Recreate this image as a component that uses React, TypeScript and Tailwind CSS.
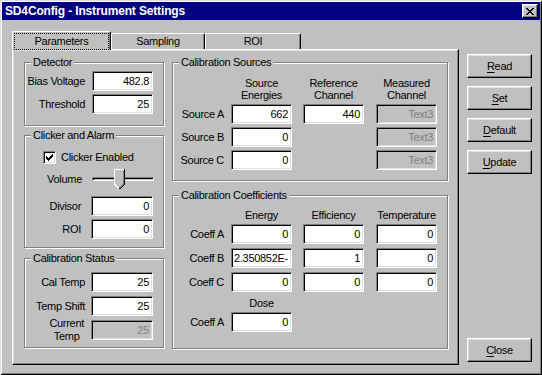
import React from "react";

const raised =
  "border border-t-white border-l-white border-r-black border-b-black shadow-[inset_-1px_-1px_0_#808080,inset_1px_1px_0_#dfdfdf]";
const sunken =
  "border border-t-[#808080] border-l-[#808080] border-r-white border-b-white shadow-[inset_1px_1px_0_#000,inset_-1px_-1px_0_#dfdfdf]";

const closeGlyph = [
  "XX....XX",
  ".XX..XX.",
  "..XXXX..",
  "...XX...",
  "..XXXX..",
  ".XX..XX.",
  "XX....XX",
];

const checkGlyph = [
  "......X",
  ".....XX",
  "X...XXX",
  "XX.XXX.",
  "XXXXX..",
  ".XXX...",
  "..X....",
];

function Pixels({ rows }: { rows: string[] }) {
  return (
    <svg width={rows[0].length} height={rows.length} shapeRendering="crispEdges">
      {rows.flatMap((r, y) =>
        [...r].map((c, x) =>
          c === "X" ? <rect key={`${x}-${y}`} x={x} y={y} width={1} height={1} fill="#000" /> : null
        )
      )}
    </svg>
  );
}

function Field({
  value,
  disabled,
  left,
  className = "",
}: {
  value: string;
  disabled?: boolean;
  left?: boolean;
  className?: string;
}) {
  return (
    <div
      className={`${sunken} h-[20px] w-[61px] shrink-0 flex items-center overflow-hidden whitespace-nowrap ${
        disabled ? "bg-[#c0c0c0] text-[#808080]" : "bg-white"
      } ${left ? "justify-start pl-[2px]" : "justify-end pr-[3px]"} ${className}`}
    >
      {value}
    </div>
  );
}

function Group({
  title,
  className,
  children,
}: {
  title: string;
  className: string;
  children: React.ReactNode;
}) {
  return (
    <fieldset
      className={`border border-[#808080] shadow-[1px_1px_0_#fff,inset_1px_1px_0_#fff] ${className}`}
    >
      <legend className="ml-[6px] px-[2px] leading-[13px] bg-[#c0c0c0]">{title}</legend>
      {children}
    </fieldset>
  );
}

function Button({ label, hot }: { label: string; hot: number }) {
  return (
    <div className={`${raised} h-[24px] w-[65px] flex items-center justify-center`}>
      {label.slice(0, hot)}
      <span className="underline underline-offset-2">{label[hot]}</span>
      {label.slice(hot + 1)}
    </div>
  );
}

function Slider() {
  return (
    <div className="relative w-[62px] h-[20px] flex items-center">
      <div className="w-full h-[4px] border border-t-[#808080] border-l-[#808080] border-r-white border-b-white shadow-[inset_1px_1px_0_#000]" />
      <svg className="absolute left-[22px] top-0" width="11" height="20" shapeRendering="crispEdges">
        <polygon points="0,0 11,0 11,15 5.5,20 0,15" fill="#c0c0c0" />
        <polyline points="0.5,15 0.5,0.5 10,0.5" fill="none" stroke="#fff" />
        <polyline points="0.5,15 5,19.5" fill="none" stroke="#fff" />
        <polyline points="10.5,0 10.5,15 5.5,20" fill="none" stroke="#000" />
        <polyline points="9.5,1.5 9.5,15 5.5,19" fill="none" stroke="#808080" />
      </svg>
    </div>
  );
}

export default function App() {
  return (
    <div className="w-[542px] h-[375px] bg-[#c0c0c0] p-[2px] shadow-[inset_1px_1px_0_#dfdfdf,inset_-1px_-1px_0_#000,inset_2px_2px_0_#fff,inset_-2px_-2px_0_#808080] font-['Liberation_Sans',Arial,sans-serif] text-[11px] tracking-[-0.3px] text-black">
      {/* title bar */}
      <div className="h-[18px] bg-[#000080] flex items-center justify-between pl-[3px] pr-[2px]">
        <span className="text-white font-bold text-[12px] tracking-[-0.15px]">
          SD4Config - Instrument Settings
        </span>
        <div className={`${raised} bg-[#c0c0c0] w-[16px] h-[14px] flex items-center justify-center`}>
          <Pixels rows={closeGlyph} />
        </div>
      </div>

      <div className="flex pt-[11px] pl-[10px]">
        <div className="w-[447px]">
          {/* tabs */}
          <div className="flex items-end">
            <div className="relative z-10 -mb-[1px] h-[19px] w-[99px] bg-[#c0c0c0] border-t border-l border-r border-t-white border-l-white border-r-black shadow-[inset_-1px_0_0_#808080] rounded-t-[2px] pt-[1px] px-[1px]">
              <div className="h-full border border-dotted border-black flex items-center justify-center">
                Parameters
              </div>
            </div>
            <div className="h-[16px] w-[94px] border-t border-l border-r border-t-white border-l-white border-r-black shadow-[inset_-1px_0_0_#808080] rounded-t-[2px] flex items-center justify-center">
              Sampling
            </div>
            <div className="h-[16px] w-[96px] border-t border-l border-r border-t-white border-l-white border-r-black shadow-[inset_-1px_0_0_#808080] rounded-t-[2px] flex items-center justify-center">
              ROI
            </div>
          </div>

          {/* tab panel */}
          <div className={`${raised} h-[316px] flex gap-[8px] pl-[11px] pt-[6px]`}>
            <div className="w-[140px] flex flex-col">
              <Group title="Detector" className="h-[70px]">
                <div className="pt-[2px] flex flex-col gap-[3px]">
                  <div className="flex items-center justify-end gap-[7px] pr-[10px]">
                    Bias Voltage
                    <Field value="482.8" className="w-[53px]" />
                  </div>
                  <div className="flex items-center justify-end gap-[7px] pr-[10px]">
                    Threshold
                    <Field value="25" className="w-[53px]" />
                  </div>
                </div>
              </Group>

              <Group title="Clicker and Alarm" className="h-[119px] mt-[3px]">
                <div className="pt-[7px] flex flex-col">
                  <div className="h-[16px] flex items-center gap-[5px] pl-[18px]">
                    <div className={`${sunken} bg-white w-[13px] h-[13px] flex items-center justify-center`}>
                      <Pixels rows={checkGlyph} />
                    </div>
                    Clicker Enabled
                  </div>
                  <div className="mt-[4px] flex items-center justify-end gap-[10px] pr-[9px]">
                    Volume
                    <Slider />
                  </div>
                  <div className="mt-[7px] flex items-center justify-end gap-[10px] pr-[10px]">
                    Divisor
                    <Field value="0" className="w-[62px]" />
                  </div>
                  <div className="mt-[3px] flex items-center justify-end gap-[10px] pr-[10px]">
                    ROI
                    <Field value="0" className="w-[62px]" />
                  </div>
                </div>
              </Group>

              <Group title="Calibration Status" className="h-[96px] mt-[4px]">
                <div className="pt-[7px] flex flex-col gap-[4px]">
                  <div className="flex items-center justify-end gap-[6px] pr-[10px]">
                    Cal Temp
                    <Field value="25" className="w-[62px]" />
                  </div>
                  <div className="flex items-center justify-end gap-[6px] pr-[10px]">
                    Temp Shift
                    <Field value="25" className="w-[62px]" />
                  </div>
                  <div className="h-[20px] flex items-center justify-end gap-[7px] pr-[10px]">
                    <div className="text-center leading-[13px]">
                      Current
                      <br />
                      Temp
                    </div>
                    <Field value="25" disabled className="w-[62px]" />
                  </div>
                </div>
              </Group>
            </div>

            <div className="w-[276px] flex flex-col">
              <Group title="Calibration Sources" className="h-[125px]">
                <div className="pt-[8px] flex flex-col">
                  <div className="flex justify-end pr-[10px] leading-[12px] text-center">
                    <div className="w-[61px]">
                      Source
                      <br />
                      Energies
                    </div>
                    <div className="w-[61px] ml-[11px]">
                      Reference
                      <br />
                      Channel
                    </div>
                    <div className="w-[61px] ml-[12px]">
                      Measured
                      <br />
                      Channel
                    </div>
                  </div>
                  <div className="mt-[3px] flex flex-col gap-[3px]">
                    {[
                      ["Source A", "662", "440"],
                      ["Source B", "0", ""],
                      ["Source C", "0", ""],
                    ].map(([label, energy, ref]) => (
                      <div key={label} className="flex items-center justify-end pr-[10px]">
                        <span className="mr-[7px]">{label}</span>
                        <Field value={energy} />
                        {ref ? (
                          <Field value={ref} className="ml-[11px]" />
                        ) : (
                          <div className="w-[61px] ml-[11px]" />
                        )}
                        <Field value="Text3" disabled className="ml-[12px]" />
                      </div>
                    ))}
                  </div>
                </div>
              </Group>

              <Group title="Calibration Coefficients" className="h-[160px] mt-[8px]">
                <div className="pt-[7px] flex flex-col">
                  <div className="flex justify-end pr-[10px] leading-[12px] text-center">
                    <div className="w-[61px]">Energy</div>
                    <div className="w-[61px] ml-[11px]">Efficiency</div>
                    <div className="w-[61px] ml-[12px]">Temperature</div>
                  </div>
                  <div className="mt-[3px] flex flex-col gap-[4px]">
                    {[
                      ["Coeff A", "0", "0", "0"],
                      ["Coeff B", "2.350852E-", "1", "0"],
                      ["Coeff C", "0", "0", "0"],
                    ].map(([label, e, f, t]) => (
                      <div key={label} className="flex items-center justify-end pr-[10px]">
                        <span className="mr-[7px]">{label}</span>
                        <Field value={e} left={e.length > 5} />
                        <Field value={f} className="ml-[11px]" />
                        <Field value={t} className="ml-[12px]" />
                      </div>
                    ))}
                  </div>
                  <div className="mt-[5px] flex justify-end pr-[10px] leading-[12px] text-center">
                    <div className="w-[61px]">Dose</div>
                    <div className="w-[61px] ml-[11px]" />
                    <div className="w-[61px] ml-[12px]" />
                  </div>
                  <div className="mt-[3px] flex items-center justify-end pr-[10px]">
                    <span className="mr-[7px]">Coeff A</span>
                    <Field value="0" />
                    <div className="w-[61px] ml-[11px]" />
                    <div className="w-[61px] ml-[12px]" />
                  </div>
                </div>
              </Group>
            </div>
          </div>
        </div>

        {/* command buttons */}
        <div className="ml-[8px] w-[65px] flex flex-col gap-[8px] pt-[23px] pb-[3px]">
          <Button label="Read" hot={0} />
          <Button label="Set" hot={0} />
          <Button label="Default" hot={0} />
          <Button label="Update" hot={0} />
          <div className="mt-auto">
            <Button label="Close" hot={0} />
          </div>
        </div>
      </div>
    </div>
  );
}
